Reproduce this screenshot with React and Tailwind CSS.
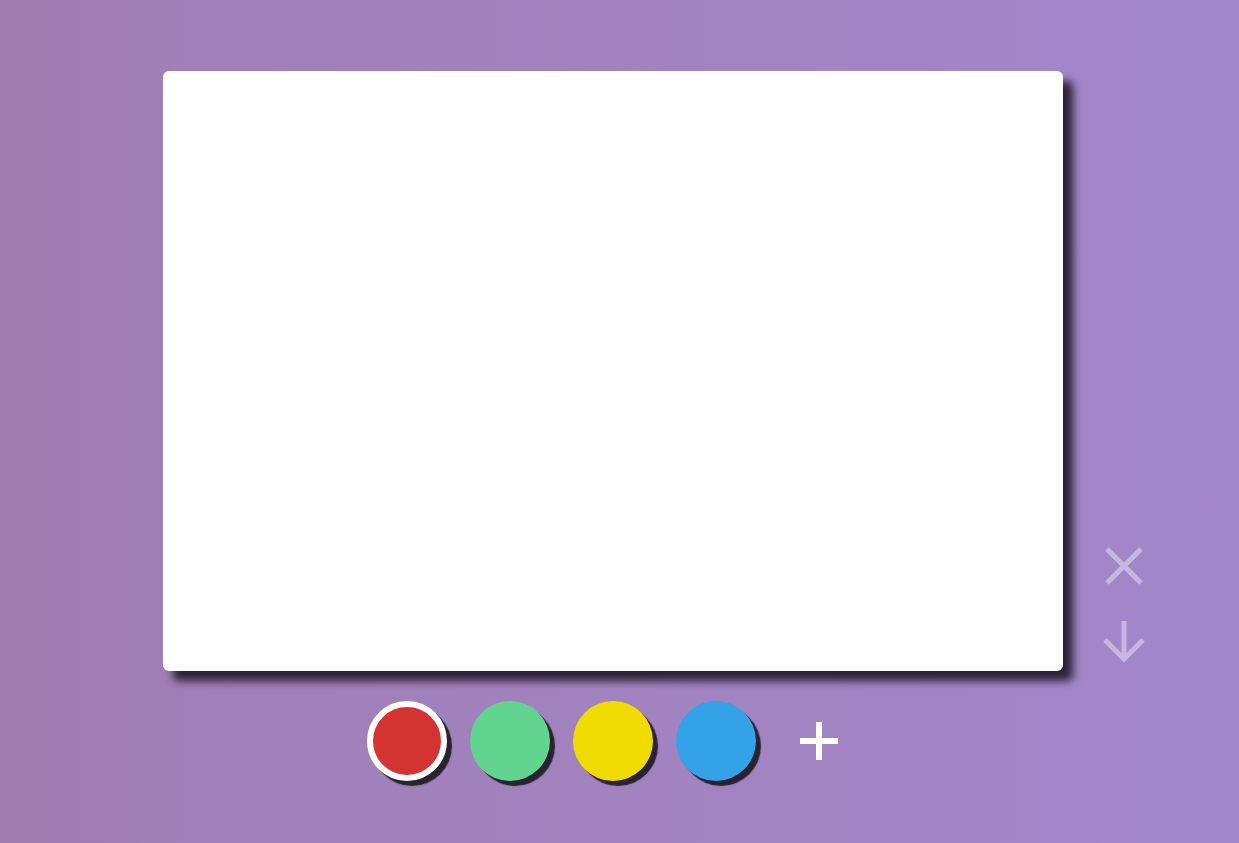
export default function App() {
  const colors = ["#d43431", "#62d490", "#f0dc00", "#33a2e6"];
  return (
    <div className="w-[1239px] h-[843px] overflow-hidden bg-[linear-gradient(to_right,#a07eb2,#a387cc)] font-['Liberation_Sans',sans-serif]">
      <div className="pt-[71px] pl-[163px] flex flex-col">
        <div className="flex flex-row items-end">
          <div className="w-[900px] h-[600px] bg-white rounded-[6px] shadow-[10px_10px_9px_rgba(40,30,52,0.97)]" />
          <div className="ml-[40px] pb-[9px] flex flex-col items-center gap-[34px] opacity-40">
            <svg width="40" height="40" viewBox="0 0 40 40" fill="none" stroke="#ffffff" strokeWidth="5">
              <path d="M3 3 L37 37 M37 3 L3 37" />
            </svg>
            <svg width="42" height="42" viewBox="0 0 42 42" fill="none" stroke="#ffffff" strokeWidth="5">
              <path d="M21 1 L21 38 M2 20 L21 39 L40 20" />
            </svg>
          </div>
        </div>
        <div className="w-[900px] mt-[30px] flex flex-row justify-center gap-[23px]">
          {colors.map((c, i) => (
            <div
              key={c}
              className={
                i === 0
                  ? "w-[80px] h-[80px] rounded-full border-[6px] border-white shadow-[5px_5px_1px_#2a2232]"
                  : "w-[80px] h-[80px] rounded-full shadow-[5px_5px_1px_#2a2232]"
              }
              style={{ backgroundColor: c }}
            />
          ))}
          <div className="w-[80px] h-[80px] flex items-center justify-center">
            <svg width="38" height="38" viewBox="0 0 38 38" fill="none" stroke="#ffffff" strokeWidth="6">
              <path d="M19 0 L19 38 M0 19 L38 19" />
            </svg>
          </div>
        </div>
      </div>
    </div>
  );
}
